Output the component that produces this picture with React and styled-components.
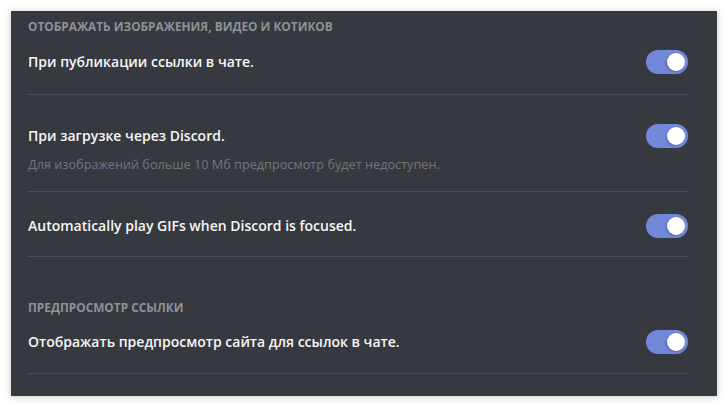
import React from "react";
import styled, { createGlobalStyle } from "styled-components";

const Global = createGlobalStyle`
  html, body { margin: 0; padding: 0; background: #ffffff; }
  body { font-family: "Open Sans", "Noto Sans", sans-serif; }
  * { box-sizing: border-box; }
`;

const Page = styled.div`
  width: 728px;
  height: 407px;
  padding: 11px;
  background: #ffffff;
`;

const Panel = styled.div`
  width: 706px;
  height: 385px;
  background: #36393f;
  box-shadow: 0 1px 8px rgba(0, 0, 0, 0.18), 0 0 3px rgba(0, 0, 0, 0.08);
  padding: 7px 29px 0 17px;
  display: flex;
  flex-direction: column;
`;

const Section = styled.section`
  display: flex;
  flex-direction: column;
  margin-top: ${(p) => p.$top || 0}px;
`;

const SectionTitle = styled.h2`
  margin: 0 0 ${(p) => p.$gap ?? 16}px;
  font-size: 11.85px;
  line-height: 16px;
  font-weight: 700;
  letter-spacing: 0;
  text-transform: uppercase;
  color: #8e9297;
`;

const Item = styled.div`
  display: flex;
  flex-direction: column;
  padding-top: ${(p) => p.$top || 0}px;
  padding-bottom: ${(p) => p.$bottom ?? 20}px;
  border-bottom: 1px solid #4a4d53;
`;

const Row = styled.div`
  display: flex;
  align-items: center;
  justify-content: space-between;
  height: 24px;
`;

const Title = styled.div`
  font-size: 14px;
  line-height: 24px;
  font-weight: 600;
  color: #f6f6f7;
`;

const Note = styled.div`
  margin-top: 8px;
  font-size: 12.7px;
  line-height: 16px;
  color: #72767d;
`;

const Track = styled.button`
  position: relative;
  width: 42px;
  height: 24px;
  border: none;
  padding: 0;
  border-radius: 12px;
  background: ${(p) => (p.$on ? "#7289da" : "#72767d")};
  flex-shrink: 0;
  cursor: pointer;
`;

const Knob = styled.span`
  position: absolute;
  top: 3px;
  left: ${(p) => (p.$on ? "21px" : "3px")};
  width: 18px;
  height: 18px;
  border-radius: 50%;
  background: #ffffff;
  box-shadow: -1px 1px 2px rgba(0, 0, 0, 0.25);
`;

const Toggle = ({ on = true }) => (
  <Track $on={on} aria-pressed={on}>
    <Knob $on={on} />
  </Track>
);

const Setting = ({ title, note, top, bottom }) => (
  <Item $top={top} $bottom={bottom}>
    <Row>
      <Title>{title}</Title>
      <Toggle on />
    </Row>
    {note && <Note>{note}</Note>}
  </Item>
);

export default function App() {
  return (
    <>
      <Global />
      <Page>
        <Panel>
          <Section>
            <SectionTitle>Отображать изображения, видео и котиков</SectionTitle>
            <Setting title="При публикации ссылки в чате." top={0} />
            <Setting
              title="При загрузке через Discord."
              note="Для изображений больше 10 Мб предпросмотр будет недоступен."
              top={29}
              bottom={19}
            />
            <Setting title="Automatically play GIFs when Discord is focused." top={22} bottom={18} />
          </Section>
          <Section $top={42}>
            <SectionTitle $gap={15}>Предпросмотр ссылки</SectionTitle>
            <Setting title="Отображать предпросмотр сайта для ссылок в чате." top={0} bottom={19} />
          </Section>
        </Panel>
      </Page>
    </>
  );
}
